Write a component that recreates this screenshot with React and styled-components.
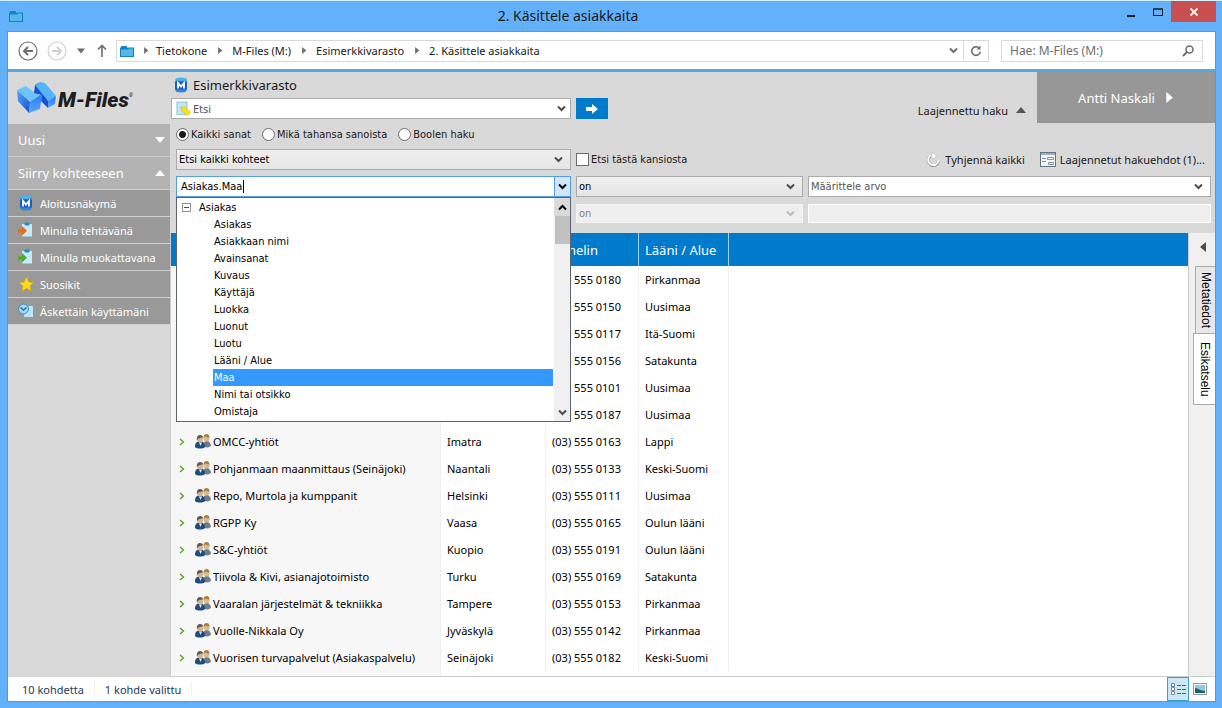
import { Fragment, useState } from 'react'
import styled, { createGlobalStyle } from 'styled-components'

const uiFont = `'Noto Sans', 'Open Sans', sans-serif`
const formFont = `'DejaVu Sans Condensed', 'DejaVu Sans', sans-serif`

const GlobalStyle = createGlobalStyle`
  * {
    box-sizing: border-box;
  }
  body {
    margin: 0;
    font-family: ${uiFont};
    font-size: 11px;
    color: #1a1a1a;
  }
  button, input, select {
    margin: 0;
    padding: 0;
    border: 0;
    border-radius: 0;
    background: none;
    color: inherit;
    font: inherit;
  }
  svg {
    display: block;
    flex-shrink: 0;
  }
`

const Window = styled.div`
  display: flex;
  flex-direction: column;
  min-height: 100vh;
  padding: 0 6px 6px 7px;
  background: #64b1fb;
  border-top: 1px solid #d4f0fb;
`

const TitleBar = styled.header`
  display: grid;
  grid-template-columns: 30px 1fr 117px;
  align-items: center;
  height: 30px;
`

const TitleText = styled.h1`
  margin: 0;
  text-align: center;
  font-size: 14px;
  font-weight: 400;
  line-height: 30px;
`

const TitleIcon = styled.div`
  padding-left: 2px;
`

const WindowButtons = styled.div`
  display: flex;
  align-self: start;
  justify-content: flex-end;
`

const WindowButton = styled.button`
  display: flex;
  align-items: center;
  justify-content: center;
  width: ${props => (props.$close ? '45px' : '27px')};
  height: 21px;
  background: ${props => (props.$close ? '#c84f50' : 'none')};
`

const Frame = styled.div`
  display: flex;
  flex: 1;
  flex-direction: column;
  background: #d9d9d9;
  border: 1px solid #4f9be0;
`

const NavBar = styled.nav`
  display: flex;
  align-items: center;
  height: 40px;
  padding: 0 12px 0 10px;
  background: #fff;
  border-bottom: 3px solid #5aa5e3;
`

const NavButton = styled.button`
  display: flex;
  align-items: center;
  justify-content: center;
  width: ${props => props.$width || 28}px;
  height: 22px;
`

const AddressBar = styled.div`
  display: flex;
  flex: 1;
  align-items: center;
  height: 22px;
  padding-left: 3px;
  border: 1px solid #d9d9d9;
`

const Crumb = styled.a`
  color: #1a1a1a;
  text-decoration: none;
  line-height: 20px;
`

const CrumbArrow = styled.span`
  display: flex;
  justify-content: center;
  width: ${props => (props.$first ? 22 : 25)}px;
`

const AddressButtons = styled.div`
  display: flex;
  margin-left: auto;
`

const RefreshButton = styled(NavButton)`
  border-left: 1px solid #d9d9d9;
`

const NavSearch = styled.label`
  display: flex;
  align-items: center;
  justify-content: space-between;
  width: 202px;
  height: 22px;
  margin-left: 12px;
  padding: 0 8px;
  border: 1px solid #d9d9d9;

  input {
    width: 150px;
    font-size: 12px;
    outline: none;
  }
  input::placeholder {
    color: #6d6d6d;
    opacity: 1;
  }
`

const Workspace = styled.div`
  display: flex;
  flex: 1;
`

const Sidebar = styled.aside`
  width: 162px;
`

const Logo = styled.div`
  display: flex;
  align-items: center;
  gap: 1px;
  height: 52px;
  padding-left: 9px;
`

const LogoText = styled.span`
  padding-top: 3px;
  font-family: Roboto, sans-serif;
  font-size: 21px;
  font-weight: 900;
  font-style: italic;
  color: #1d1d1f;
`

const Registered = styled.sup`
  font-size: 5px;
  vertical-align: 10px;
  line-height: 0;
`

const SidebarHeading = styled.button`
  display: flex;
  align-items: center;
  justify-content: space-between;
  width: 100%;
  height: 33px;
  padding: 0 5px 0 10px;
  background: #b3b3b3;
  border-bottom: 1px solid #d0d0d0;
  color: #fff;
  font-size: 13px;
`

const SidebarLink = styled.a`
  display: flex;
  align-items: center;
  gap: 6px;
  height: 27px;
  padding-left: 10px;
  background: #999;
  border-bottom: 1px solid #d0d0d0;
  color: #fff;
  text-decoration: none;
`

const Content = styled.main`
  display: flex;
  flex: 1;
  flex-direction: column;
  min-width: 0;
`

const SearchHeader = styled.section`
  display: flex;
  height: 51px;
  padding-left: 1px;
`

const VaultSearch = styled.div`
  width: 437px;
`

const VaultName = styled.h2`
  display: flex;
  align-items: center;
  gap: 4px;
  height: 26px;
  margin: 0;
  padding-left: 2px;
  font-size: 13px;
  font-weight: 400;
`

const QuickSearch = styled.form`
  display: flex;
  gap: 5px;
`

const QuickSearchBox = styled.label`
  display: flex;
  flex: 1;
  align-items: center;
  gap: 2px;
  height: 21px;
  padding: 0 4px;
  background: #fff;
  border: 1px solid #ababab;

  input {
    flex: 1;
    min-width: 0;
    outline: none;
  }
  input::placeholder {
    color: #555;
    opacity: 1;
  }
`

const GoButton = styled.button`
  display: flex;
  align-items: center;
  justify-content: center;
  width: 32px;
  height: 21px;
  background: #007acb;
`

const AdvancedToggle = styled.button`
  display: flex;
  align-items: center;
  align-self: flex-end;
  gap: 8px;
  height: 26px;
  margin-left: auto;
  margin-right: 11px;
`

const UserButton = styled.button`
  display: flex;
  align-items: center;
  justify-content: center;
  gap: 8px;
  width: 178px;
  background: #979797;
  color: #fff;
  font-size: 13px;
`

const SearchForm = styled.section`
  padding: 0 4px 6px 6px;
  font-family: ${formFont};
`

const RadioRow = styled.div`
  display: flex;
  align-items: center;
  gap: 11px;
  height: 22px;
  margin-bottom: 1px;
`

const Choice = styled.label`
  display: flex;
  align-items: center;
  gap: 2px;

  input {
    appearance: none;
    width: 13px;
    height: 13px;
    background: #fff;
    border: 1px solid #6b6b6b;
  }
  input[type='radio'] {
    border-radius: 50%;
  }
  input[type='radio']:checked {
    background: radial-gradient(circle, #1a1a1a 3px, #fff 4px);
  }
`

const FieldRow = styled.div`
  display: grid;
  grid-template-columns: 395px 227px 1fr;
  align-items: center;
  column-gap: 5px;
  height: 27px;
`

const SelectWrap = styled.div`
  display: grid;
  grid-template-columns: 1fr 17px;
  align-items: center;

  select {
    grid-area: 1 / 1 / 2 / 3;
    appearance: none;
    width: 100%;
    height: 21px;
    padding: 0 2px;
    background: ${props => (props.$white ? '#fff' : 'linear-gradient(#f0f0f0, #e5e5e5)')};
    border: 1px solid #ababab;
    color: ${props => (props.$white ? '#555' : '#000')};
  }
  select:disabled {
    height: 19px;
    background: #efefef;
    border-color: #f3f3f3;
    color: #838383;
    opacity: 1;
  }
  svg {
    grid-area: 1 / 2 / 2 / 3;
    pointer-events: none;
    z-index: 1;
  }
`

const FormActions = styled.div`
  display: flex;
  align-items: center;
  justify-content: flex-end;
  gap: 15px;
  grid-column: 3;
  padding-right: 6px;
  font-family: ${uiFont};
  white-space: nowrap;
`

const ActionButton = styled.button`
  display: flex;
  align-items: center;
  gap: 4px;
`

const DisabledField = styled.input`
  width: 100%;
  height: 19px;
  background: #efefef;
  border: 1px solid #fff;
`

const Combo = styled.div`
  position: relative;
  display: flex;
  height: 21px;
  background: #fff;
  border: 1px solid #569de5;

  > input {
    flex: 1;
    min-width: 0;
    padding-left: 4px;
    outline: none;
    color: #000;
  }
`

const Caret = styled.span`
  position: absolute;
  top: 3px;
  left: 66px;
  width: 1px;
  height: 13px;
  background: #000;
`

const ComboButton = styled.button`
  display: flex;
  align-items: center;
  justify-content: center;
  width: 16px;
  background: #d0e6fb;
  border-left: 1px solid #569de5;
`

const DropDown = styled.div`
  position: absolute;
  top: 20px;
  left: -1px;
  right: -1px;
  z-index: 2;
  display: flex;
  height: 225px;
  background: #fff;
  border: 1px solid #5b6570;
  color: #000;
`

const Tree = styled.ul`
  flex: 1;
  margin: 0;
  padding: 1px 1px 0 5px;
  list-style: none;
`

const TreeRoot = styled.li`
  display: flex;
  align-items: center;
  gap: 8px;
  line-height: 17px;
`

const TreeItem = styled.li`
  margin-left: 31px;
  padding-left: 1px;
  line-height: 17px;
  background: ${props => (props.$selected ? '#3399ff' : 'none')};
  color: ${props => (props.$selected ? '#fff' : '#000')};
`

const ScrollBar = styled.div`
  display: flex;
  flex-direction: column;
  align-items: center;
  width: 16px;
  background: #f0f0f0;
`

const ScrollButton = styled.button`
  display: flex;
  align-items: center;
  justify-content: center;
  width: 16px;
  height: 18px;
  margin-top: ${props => (props.$end ? 'auto' : 0)};
  background: ${props => (props.$end ? 'none' : '#dadada')};
`

const ScrollThumb = styled.div`
  width: 15px;
  height: 28px;
  background: #c1c1c1;
`

const Listing = styled.section`
  display: flex;
  flex: 1;
  background: #fff;
  border-left: 1px solid #ccc;
  border-bottom: 1px solid #ccc;
`

const ListingBody = styled.div`
  display: flex;
  flex: 1;
  background: linear-gradient(90deg, #f7f7f7 269px, #e9eff5 269px 270px, #fff 270px);
`

const Table = styled.table`
  align-self: flex-start;
  width: 100%;
  table-layout: fixed;
  border-collapse: separate;
  border-spacing: 0;
`

const HeadCell = styled.th`
  height: 33px;
  padding: 0 6px;
  background: #007acb;
  border-right: ${props => (props.$last ? '0' : '1px solid #9fd0f0')};
  color: #fff;
  font-size: 13px;
  font-weight: 400;
  text-align: left;
`

const Cell = styled.td`
  height: 27px;
  padding: 0 6px;
  border-right: 1px solid #e9eff5;
  color: #000;
  white-space: nowrap;
`

const NameCell = styled.div`
  display: flex;
  align-items: center;
  gap: 2px;
`

const Expander = styled.button`
  display: flex;
  width: 14px;
  margin-left: 2px;
`

const SidePane = styled.aside`
  display: flex;
  flex-direction: column;
  align-items: flex-end;
  width: 27px;
  background: #f0f0f0;
  border-left: 1px solid #ccc;
`

const CollapseButton = styled.button`
  display: flex;
  align-items: center;
  justify-content: center;
  width: 22px;
  height: 27px;
  margin-bottom: 6px;
`

const SideTab = styled.button`
  width: ${props => (props.$active ? 22 : 20)}px;
  height: ${props => (props.$active ? 72 : 67)}px;
  background: ${props => (props.$active ? '#fff' : '#e8e8e8')};
  border: 1px solid #aaa;
  border-right: 0;
  border-bottom-width: ${props => (props.$active ? 1 : 0)}px;
  writing-mode: vertical-rl;
  font-family: 'Liberation Sans', Arial, sans-serif;
  font-size: 12px;
  line-height: 18px;
  color: #000;
`

const StatusBar = styled.footer`
  display: flex;
  align-items: center;
  height: 24px;
  padding-left: 7px;
  background: #fff;
  color: #1e395b;
`

const StatusText = styled.span`
  padding: 0 10px 0 7px;
  border-right: 1px solid #f0f0f0;

  & + & {
    padding-left: 10px;
  }
`

const ViewButtons = styled.div`
  display: flex;
  margin-left: auto;
  padding-right: 4px;
`

const ViewButton = styled.button`
  display: flex;
  align-items: center;
  justify-content: center;
  width: 22px;
  height: 24px;
  background: ${props => (props.$active ? '#cce8f6' : 'none')};
  border: ${props => (props.$active ? '1px solid #3c9fd0' : '0')};
`

const FolderIcon = () => (
  <svg width="14" height="12" viewBox="0 0 14 12">
    <path d="M1.5 3V1.5h5V3" fill="#1283c4" stroke="#1283c4" />
    <rect x="0.5" y="3" width="13" height="8.5" fill="#56b8e6" stroke="#1283c4" />
    <path d="M1 3h7l1 1.5h-8z" fill="#1283c4" />
  </svg>
)

const Chevron = ({ up, color = '#4d4d4d' }) => (
  <svg width="9" height="7" viewBox="0 0 9 7">
    <path d={up ? 'M1 5.5L4.5 2L8 5.5' : 'M1 1.5L4.5 5L8 1.5'} fill="none" stroke={color} strokeWidth="2" />
  </svg>
)

const Triangle = ({ dir, size = 10, color = '#fff' }) => {
  const paths = {
    up: 'M0 8L5 2L10 8z',
    down: 'M0 2L5 8L10 2z',
    right: 'M3 0L9 5L3 10z',
    left: 'M7 0L1 5L7 10z',
  }
  return (
    <svg width={size} height={size} viewBox="0 0 10 10">
      <path d={paths[dir]} fill={color} />
    </svg>
  )
}

const RoundArrow = ({ color, flip }) => (
  <svg width="20" height="20" viewBox="0 0 20 20" fill="none" stroke={color}>
    <circle cx="10" cy="10" r="9" strokeWidth="1.2" />
    <path d={flip ? 'M5 10h9M10 6l4 4l-4 4' : 'M15 10H6M10 6l-4 4l4 4'} strokeWidth="2" />
  </svg>
)

const Refresh = () => (
  <svg width="12" height="12" viewBox="0 0 12 12">
    <path d="M8.8 2.8A4.300 4.300 0 1 0 10.300 6.500" fill="none" stroke="#6d6d6d" strokeWidth="1.600" />
    <path d="M6.500 4.600h4V0.600z" fill="#6d6d6d" />
  </svg>
)

const ClearIcon = () => (
  <svg width="15" height="16" viewBox="0 0 15 16">
    <path d="M4.500 4A5.200 5.200 0 1 0 12.500 9.500" fill="none" stroke="#8f8f8f" strokeWidth="3" />
    <path d="M4.500 3.500A5.200 5.200 0 1 0 12.500 8.500" fill="none" stroke="#fff" strokeWidth="2" />
    <path d="M6 0.500l5 3.500l-5 3.500z" fill="#fff" stroke="#b5b5b5" strokeWidth="0.500" />
  </svg>
)

const VaultIcon = () => (
  <svg width="16" height="16" viewBox="-1 0 16 16">
    <path d="M1.500 2v11.800c0 1 2.500 1.700 5.500 1.700s5.500-.7 5.500-1.700V2z" fill="#2f86e0" />
    <ellipse cx="7" cy="2.200" rx="5.500" ry="1.700" fill="#49b4ee" />
    <path d="M1 4.500h12v8H1z" fill="#1a5fc4" />
    <path d="M4 11.500V6l3 3.500L10 6v5.500" fill="none" stroke="#fff" strokeWidth="1.800" />
  </svg>
)

const LogoMark = () => (
  <svg width="40" height="32" viewBox="0 0 40 32">
    <defs>
      <linearGradient id="front" x1="0" y1="0" x2="1" y2="1">
        <stop offset="0" stopColor="#4fa8fb" />
        <stop offset="1" stopColor="#1450d2" />
      </linearGradient>
      <linearGradient id="side" x1="0" y1="0" x2="0" y2="1">
        <stop offset="0" stopColor="#2a78f0" />
        <stop offset="1" stopColor="#58a8ff" />
      </linearGradient>
    </defs>
    <path d="M0 8L9 4L18 11L25 13L13 20z" fill="#6cc4fb" />
    <path d="M0 8L13 20L12 31L1 19z" fill="url(#front)" />
    <path d="M13 20L25 12L23 27L12 31z" fill="url(#side)" />
    <path d="M18 3L21 1L31 19V26L24 19L25 13L17 11z" fill="#1450d2" />
    <path d="M18 3L23 0L28 1L39 14L31 19L22 8z" fill="#56b4fa" />
    <path d="M31 19L39 14L38 22L31 26z" fill="url(#side)" />
  </svg>
)

const ClipIcon = ({ color }) => (
  <svg width="16" height="16" viewBox="0 0 16 16">
    <rect x="4" y="2" width="10" height="12.5" fill="#c5ebfa" />
    <rect x="6.5" y="0.5" width="5" height="3" rx="1" fill="#1d8fc4" />
    <path d="M0 7.5h4V4l5 4.800l-5 4.700v-3H0z" fill={color} />
  </svg>
)

const StarIcon = () => (
  <svg width="16" height="16" viewBox="0 0 16 16">
    <path d="M8.5 1L10.7 6L15.5 6.5L12 10L13 15L8.500 12.300L4 15L5 10L1.500 6.500L6.300 6z" fill="#ffd91c" stroke="#e0a800" strokeWidth="0.6" />
  </svg>
)

const RecentIcon = () => (
  <svg width="16" height="16" viewBox="0 0 16 16">
    <rect x="6" y="3" width="9" height="11" fill="#b9e6f8" />
    <circle cx="5.5" cy="6" r="5" fill="#9fdaf2" stroke="#3a8fb5" />
    <path d="M2.5 4.500l3 2.500l3-2.500" fill="none" stroke="#2b6f92" strokeWidth="1.5" />
  </svg>
)

const NoteIcon = () => (
  <svg width="15" height="15" viewBox="0 0 15 15">
    <rect x="1" y="1" width="10" height="12.5" fill="#c3e6f3" stroke="#8fc3da" />
    <path d="M5 6l4 0l5.500 5.500l-3 3L5 9.500z" fill="#f7e11b" stroke="#d1b90e" strokeWidth="0.6" />
  </svg>
)

const PeopleIcon = () => (
  <svg width="16" height="15" viewBox="0 0 16 15">
    <path d="M8 13c0-4 1-6 3.500-6S16 9 16 12l-3 1.500z" fill="#6c7c8a" />
    <circle cx="11.500" cy="4.500" r="3" fill="#dcb98c" />
    <path d="M8.500 4c0-3 1.300-4 3-4s3 1 3 3.500c-2 0-3-.5-4-1z" fill="#a5803f" />
    <path d="M0 13c0-4 1.500-5.500 5-5.500s5 2 5 5.500c-2 2-8 2-10 0z" fill="#214b7c" />
    <circle cx="5" cy="5.500" r="3" fill="#d8b48a" />
    <path d="M1.800 6C1.500 2.500 3 1 5 1s3 1 3 2.500C6 3.500 4 4 3 5z" fill="#5a5a58" />
    <path d="M4 8.500l1.500 3.500L7 8.500z" fill="#dfe9f2" />
  </svg>
)

const FormIcon = () => (
  <svg width="16" height="15" viewBox="0 0 16 15">
    <rect x="0.5" y="0.5" width="15" height="14" fill="#f2f5f8" stroke="#5f7388" />
    <path d="M1 2h14" stroke="#9fb0c0" strokeWidth="2" />
    <path d="M2 6.500h4M2 9.500h4" stroke="#8293a5" />
    <path d="M7.500 5.500h6v2h-6zM8.500 10.500h5v2h-5z" fill="#fff" stroke="#8293a5" />
  </svg>
)

const DetailsIcon = () => (
  <svg width="15" height="13" viewBox="0 0 15 13" fill="none" stroke="#54616d">
    <path d="M0.5 0.500h3v3h-3zM0.500 4.500h3v3h-3zM0.500 8.500h3v3h-3z" fill="#fff" stroke="#7f8890" />
    <path d="M6 2.500h4M11 2.500h4M6 6.500h4M11 6.500h4M6 10.500h4M11 10.500h4" />
  </svg>
)

const PictureIcon = () => (
  <svg width="14" height="12" viewBox="0 0 14 12">
    <rect x="0.5" y="0.5" width="13" height="11" fill="#fff" stroke="#8d99a3" />
    <rect x="2" y="2" width="10" height="8" fill="#8cc7ec" />
    <path d="M2 5c3 0 5 3 10 3v2H2z" fill="#1f5f5c" />
  </svg>
)

const crumbs = ['Tietokone', 'M-Files (M:)', 'Esimerkkivarasto', '2. Käsittele asiakkaita']

const links = [
  { label: 'Aloitusnäkymä', icon: <VaultIcon /> },
  { label: 'Minulla tehtävänä', icon: <ClipIcon color="#ea6a1a" /> },
  { label: 'Minulla muokattavana', icon: <ClipIcon color="#4cae1e" /> },
  { label: 'Suosikit', icon: <StarIcon /> },
  { label: 'Äskettäin käyttämäni', icon: <RecentIcon /> },
]

const searchModes = ['Kaikki sanat', 'Mikä tahansa sanoista', 'Boolen haku']

const properties = [
  'Asiakas',
  'Asiakkaan nimi',
  'Avainsanat',
  'Kuvaus',
  'Käyttäjä',
  'Luokka',
  'Luonut',
  'Luotu',
  'Lääni / Alue',
  'Maa',
  'Nimi tai otsikko',
  'Omistaja',
]

const customers = [
  ['', '', '(03) 555 0180', 'Pirkanmaa'],
  ['', '', '(03) 555 0150', 'Uusimaa'],
  ['', '', '(03) 555 0117', 'Itä-Suomi'],
  ['', '', '(03) 555 0156', 'Satakunta'],
  ['', '', '(03) 555 0101', 'Uusimaa'],
  ['', '', '(03) 555 0187', 'Uusimaa'],
  ['OMCC-yhtiöt', 'Imatra', '(03) 555 0163', 'Lappi'],
  ['Pohjanmaan maanmittaus (Seinäjoki)', 'Naantali', '(03) 555 0133', 'Keski-Suomi'],
  ['Repo, Murtola ja kumppanit', 'Helsinki', '(03) 555 0111', 'Uusimaa'],
  ['RGPP Ky', 'Vaasa', '(03) 555 0165', 'Oulun lääni'],
  ['S&C-yhtiöt', 'Kuopio', '(03) 555 0191', 'Oulun lääni'],
  ['Tiivola & Kivi, asianajotoimisto', 'Turku', '(03) 555 0169', 'Satakunta'],
  ['Vaaralan järjestelmät & tekniikka', 'Tampere', '(03) 555 0153', 'Pirkanmaa'],
  ['Vuolle-Nikkala Oy', 'Jyväskylä', '(03) 555 0142', 'Pirkanmaa'],
  ['Vuorisen turvapalvelut (Asiakaspalvelu)', 'Seinäjoki', '(03) 555 0182', 'Keski-Suomi'],
]

function TopBars() {
  return (
    <NavBar>
      <NavButton aria-label="Takaisin" $width={20}><RoundArrow color="#6d6d6d" /></NavButton>
      <NavButton aria-label="Eteenpäin" $width={37}><RoundArrow color="#d0d0d0" flip /></NavButton>
      <NavButton aria-label="Historia" $width={12}><Triangle dir="down" size={8} color="#6d6d6d" /></NavButton>
      <NavButton aria-label="Ylös" $width={29}>
        <svg width="10" height="13" viewBox="0 0 10 13" fill="none" stroke="#6d6d6d" strokeWidth="1.6">
          <path d="M5 13V1.500M1 5.500l4-4l4 4" />
        </svg>
      </NavButton>
      <AddressBar>
        <FolderIcon />
        {crumbs.map((crumb, index) => (
          <Fragment key={crumb}>
            <CrumbArrow $first={index === 0}><Triangle dir="right" size={7} color="#6d6d6d" /></CrumbArrow>
            <Crumb href="#">{crumb}</Crumb>
          </Fragment>
        ))}
        <AddressButtons>
          <NavButton aria-label="Edelliset sijainnit" $width={20}><Chevron color="#6d6d6d" /></NavButton>
          <RefreshButton aria-label="Päivitä" $width={25}><Refresh /></RefreshButton>
        </AddressButtons>
      </AddressBar>
      <NavSearch>
        <input type="text" aria-label="Hae" placeholder="Hae: M-Files (M:)" />
        <svg width="12" height="12" viewBox="0 0 12 12" fill="none" stroke="#6d6d6d">
          <circle cx="7.500" cy="4.500" r="3.500" strokeWidth="1.6" />
          <path d="M5 7L1 11" strokeWidth="2" />
        </svg>
      </NavSearch>
    </NavBar>
  )
}

function PropertyPicker() {
  const [value, setValue] = useState('Asiakas.Maa')
  return (
    <Combo>
      <input type="text" aria-label="Ominaisuus" value={value} onChange={e => setValue(e.target.value)} />
      <Caret />
      <ComboButton aria-label="Avaa luettelo"><Chevron color="#000" /></ComboButton>
      <DropDown>
        <Tree>
          <TreeRoot>
            <svg width="9" height="9" viewBox="0 0 9 9">
              <rect x="0.5" y="0.5" width="8" height="8" fill="#fff" stroke="#919191" />
              <path d="M2 4.500h5" stroke="#3050a0" />
            </svg>
            Asiakas
          </TreeRoot>
          {properties.map(property => (
            <TreeItem key={property} $selected={value === `Asiakas.${property}`}>{property}</TreeItem>
          ))}
        </Tree>
        <ScrollBar>
          <ScrollButton aria-label="Vieritä ylös"><Chevron up color="#000" /></ScrollButton>
          <ScrollThumb />
          <ScrollButton $end aria-label="Vieritä alas"><Chevron /></ScrollButton>
        </ScrollBar>
      </DropDown>
    </Combo>
  )
}

function Select({ label, text, white, disabled }) {
  return (
    <SelectWrap $white={white}>
      <select aria-label={label} disabled={disabled}>
        <option>{text}</option>
      </select>
      <Chevron color={disabled ? '#bcbcbc' : '#4d4d4d'} />
    </SelectWrap>
  )
}

function SearchPanel() {
  const [mode, setMode] = useState(searchModes[0])
  return (
    <SearchForm>
      <RadioRow>
        {searchModes.map(name => (
          <Choice key={name}>
            <input type="radio" name="mode" checked={mode === name} onChange={() => setMode(name)} />
            {name}
          </Choice>
        ))}
      </RadioRow>
      <FieldRow>
        <Select label="Kohteet" text="Etsi kaikki kohteet" />
        <Choice>
          <input type="checkbox" />
          Etsi tästä kansiosta
        </Choice>
        <FormActions>
          <ActionButton><ClearIcon />Tyhjennä kaikki</ActionButton>
          <ActionButton><FormIcon />Laajennetut hakuehdot (1)...</ActionButton>
        </FormActions>
      </FieldRow>
      <FieldRow>
        <PropertyPicker />
        <Select label="Ehto" text="on" />
        <Select label="Arvo" text="Määrittele arvo" white />
      </FieldRow>
      <FieldRow>
        <span />
        <Select label="Toinen ehto" text="on" disabled />
        <DisabledField aria-label="Toinen arvo" disabled />
      </FieldRow>
    </SearchForm>
  )
}

function CustomerTable() {
  return (
    <ListingBody>
      <Table>
        <colgroup>
          <col width="270" />
          <col width="105" />
          <col width="93" />
          <col width="90" />
          <col />
        </colgroup>
        <thead>
          <tr>
            <HeadCell>Nimi</HeadCell>
            <HeadCell>Kaupunki</HeadCell>
            <HeadCell>Puhelin</HeadCell>
            <HeadCell>Lääni / Alue</HeadCell>
            <HeadCell $last />
          </tr>
        </thead>
        <tbody>
          {customers.map(([name, city, phone, region]) => (
            <tr key={phone}>
              <Cell>
                <NameCell>
                  <Expander aria-label="Laajenna">
                    <svg width="6" height="8" viewBox="0 0 6 8">
                      <path d="M1 1l3.500 3L1 7" fill="none" stroke="#5a9a1f" strokeWidth="1.3" />
                    </svg>
                  </Expander>
                  <PeopleIcon />
                  {name}
                </NameCell>
              </Cell>
              <Cell>{city}</Cell>
              <Cell>{phone}</Cell>
              <Cell>{region}</Cell>
              <td />
            </tr>
          ))}
        </tbody>
      </Table>
    </ListingBody>
  )
}

export default function App() {
  return (
    <Window>
      <GlobalStyle />
      <TitleBar>
        <TitleIcon><FolderIcon /></TitleIcon>
        <TitleText>2. Käsittele asiakkaita</TitleText>
        <WindowButtons>
          <WindowButton aria-label="Pienennä">
            <svg width="8" height="10"><path d="M0 8h8v2H0z" fill="#1a1a1a" /></svg>
          </WindowButton>
          <WindowButton aria-label="Suurenna">
            <svg width="10" height="8"><path d="M0.500 1h9v6.500h-9zM0 1h10" fill="none" stroke="#1a1a1a" /></svg>
          </WindowButton>
          <WindowButton $close aria-label="Sulje">
            <svg width="8" height="8"><path d="M0.500 0.500l7 7M7.500 0.500l-7 7" stroke="#fff" strokeWidth="1.8" /></svg>
          </WindowButton>
        </WindowButtons>
      </TitleBar>
      <Frame>
        <TopBars />
        <Workspace>
          <Sidebar>
            <Logo>
              <LogoMark />
              <LogoText>M-Files<Registered>®</Registered></LogoText>
            </Logo>
            <SidebarHeading>Uusi<Triangle dir="down" /></SidebarHeading>
            <SidebarHeading>Siirry kohteeseen<Triangle dir="up" /></SidebarHeading>
            {links.map(({ label, icon }) => (
              <SidebarLink key={label} href="#">{icon}{label}</SidebarLink>
            ))}
          </Sidebar>
          <Content>
            <SearchHeader>
              <VaultSearch>
                <VaultName><VaultIcon />Esimerkkivarasto</VaultName>
                <QuickSearch>
                  <QuickSearchBox>
                    <NoteIcon />
                    <input type="text" aria-label="Etsi" placeholder="Etsi" />
                    <Chevron />
                  </QuickSearchBox>
                  <GoButton type="button" aria-label="Hae">
                    <svg width="12" height="10"><path d="M0 3h6V0l6 5l-6 5V7H0z" fill="#fff" /></svg>
                  </GoButton>
                </QuickSearch>
              </VaultSearch>
              <AdvancedToggle>Laajennettu haku<Triangle dir="up" color="#555" /></AdvancedToggle>
              <UserButton>Antti Naskali<Triangle dir="right" size={11} /></UserButton>
            </SearchHeader>
            <SearchPanel />
            <Listing>
              <CustomerTable />
              <SidePane>
                <CollapseButton aria-label="Piilota"><Triangle dir="left" color="#4d4d4d" /></CollapseButton>
                <SideTab>Metatiedot</SideTab>
                <SideTab $active>Esikatselu</SideTab>
              </SidePane>
            </Listing>
          </Content>
        </Workspace>
        <StatusBar>
          <StatusText>10 kohdetta</StatusText>
          <StatusText>1 kohde valittu</StatusText>
          <ViewButtons>
            <ViewButton $active aria-label="Tiedot"><DetailsIcon /></ViewButton>
            <ViewButton aria-label="Kuvakkeet"><PictureIcon /></ViewButton>
          </ViewButtons>
        </StatusBar>
      </Frame>
    </Window>
  )
}
